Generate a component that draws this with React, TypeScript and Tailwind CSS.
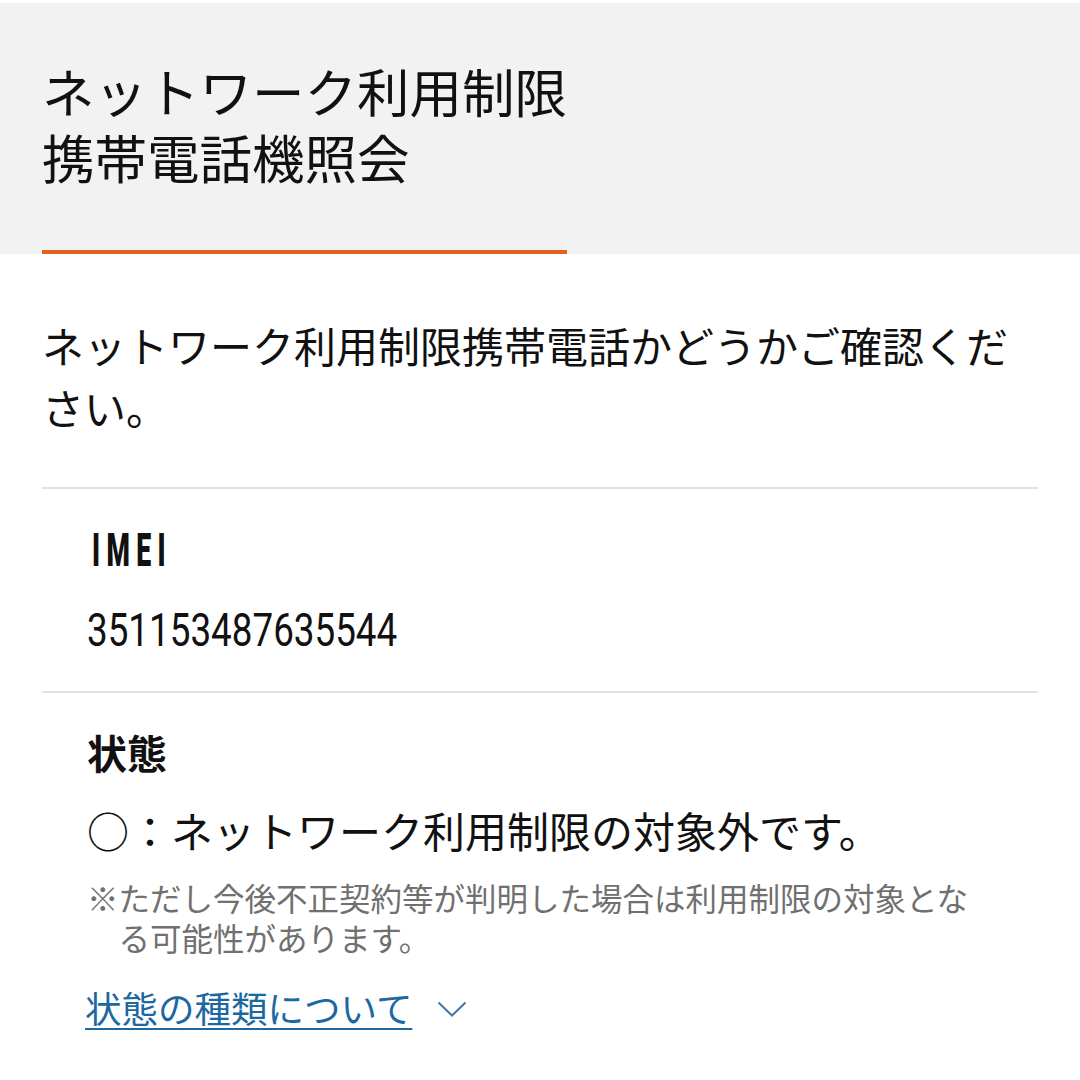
import React from "react";

const jp = { fontFamily: '"Noto Sans CJK JP", "Noto Sans", sans-serif' };
const cond = { fontFamily: 'Roboto, "Noto Sans", sans-serif' };

export default function App() {
  return (
    <div className="w-[1080px] h-[1080px] bg-white pt-[3px] overflow-hidden text-[#111]" style={jp}>
      <header className="bg-[#f2f2f2] pt-[54px]">
        <h1 className="px-[42px] text-[52.5px] leading-[66px] font-normal">
          <span className="block">ネットワーク利用制限</span>
          <span className="block">携帯電話機照会</span>
        </h1>
        <div className="mt-[61px] ml-[42px] w-[525px] h-[4px] bg-[#e0621f]" />
      </header>

      <main className="px-[42px]">
        <p className="mt-[60px] text-[42px] leading-[62px]">
          ネットワーク利用制限携帯電話かどうかご確認ください。
        </p>

        <section className="mt-[49px] border-t-2 border-[#e2e2e2] px-[45px] pt-[36px] pb-[36px]">
          <div className="h-[50px] flex items-center">
            <span
              className="inline-block origin-left scale-x-[0.58] ml-[5px] text-[46px] leading-[50px] font-black tracking-[0.24em]"
              style={cond}
            >
              IMEI
            </span>
          </div>
          <div className="mt-[30px] h-[50px] flex items-center">
            <span
              className="inline-block origin-left scale-x-[0.8] text-[46px] leading-[50px] font-normal"
              style={cond}
            >
              351153487635544
            </span>
          </div>
        </section>

        <section className="border-t-2 border-[#e2e2e2] px-[45px] pt-[34px]">
          <h2 className="text-[40px] leading-[50px] font-bold">状態</h2>
          <p className="mt-[25px] text-[42px] leading-[56px]">○：ネットワーク利用制限の対象外です。</p>
          <p className="mt-[19px] pl-[1em] -indent-[1em] text-[31.5px] leading-[40px] text-[#707070]">
            ※ただし今後不正契約等が判明した場合は利用制限の対象となる可能性があります。
          </p>
          <div className="mt-[27px] flex items-center gap-[25px] h-[48px]">
            <a
              href="#"
              className="-ml-[2px] text-[36.5px] leading-[48px] text-[#1c69a1] underline decoration-2 underline-offset-[5px]"
            >
              状態の種類について
            </a>
            <svg width="30" height="16" viewBox="0 0 30 16" className="mt-[2px]">
              <polyline
                points="1.5,1.5 15,14.5 28.5,1.5"
                fill="none"
                stroke="#4576a5"
                strokeWidth="2"
              />
            </svg>
          </div>
        </section>
      </main>
    </div>
  );
}
